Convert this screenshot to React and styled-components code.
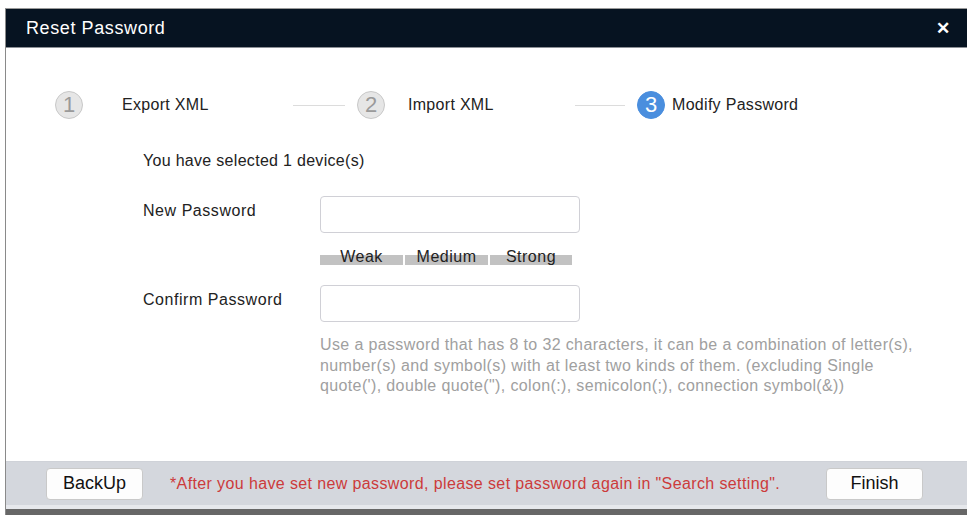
import React from 'react';
import styled, { createGlobalStyle } from 'styled-components';

const Global = createGlobalStyle`
	html, body {
		margin: 0;
		padding: 0;
		background: #ffffff;
	}
	body {
		font-family: "Liberation Sans", Arial, sans-serif;
		color: #222222;
	}
`;

const Page = styled.div`
	width: 967px;
	height: 524px;
	padding-top: 8px;
	padding-left: 5px;
	box-sizing: border-box;
	overflow: hidden;
`;

const Dialog = styled.div`
	display: flex;
	flex-direction: column;
	height: 506px;
	border-left: 1px solid #8a8a8a;
	border-top: 1px solid #9a9a9a;
`;

const Header = styled.div`
	height: 38px;
	background: #061321;
	border-bottom: 1px solid #8c9096;
	display: flex;
	align-items: center;
	justify-content: space-between;
	padding: 0 17px 0 20px;
	color: #ffffff;
`;

const Title = styled.div`
	font-size: 18px;
	letter-spacing: 0.6px;
`;

const Close = styled.div`
	font-size: 17px;
	font-weight: bold;
`;

const Body = styled.div`
	flex: 1;
	background: #ffffff;
	padding: 42px 0 0 49px;
`;

const Steps = styled.div`
	display: flex;
	align-items: center;
	height: 30px;
`;

const Circle = styled.div`
	width: 28px;
	height: 28px;
	border-radius: 50%;
	box-sizing: border-box;
	display: flex;
	align-items: center;
	justify-content: center;
	font-size: 22px;
	background: ${p => (p.$active ? '#4a8ede' : '#e6e6e6')};
	border: 1px solid ${p => (p.$active ? '#4a8ede' : '#c8c8c8')};
	color: ${p => (p.$active ? '#ffffff' : '#9a9a9a')};
`;

const StepLabel = styled.div`
	font-size: 16px;
	letter-spacing: 0.3px;
	margin-left: ${p => p.$gap}px;
	width: ${p => p.$width}px;
`;

const Line = styled.div`
	width: ${p => p.$width}px;
	height: 1px;
	background: #dcdcdc;
	margin-right: 12px;
`;

const Form = styled.div`
	padding-left: 88px;
	margin-top: 32px;
`;

const Selected = styled.div`
	font-size: 16px;
	letter-spacing: 0.3px;
	margin-bottom: 26px;
`;

const Row = styled.div`
	display: grid;
	grid-template-columns: 177px 260px;
	align-items: center;
`;

const Label = styled.div`
	font-size: 16px;
	letter-spacing: 0.55px;
	padding-bottom: 7px;
`;

const Input = styled.input`
	width: 260px;
	height: 37px;
	box-sizing: border-box;
	border: 1px solid #d0d0d6;
	border-radius: 4px;
	outline: none;
	padding: 0 8px;
`;

const Strength = styled.div`
	display: flex;
	gap: 2px;
	margin: 16px 0 20px 177px;
`;

const Segment = styled.div`
	width: ${p => p.$width}px;
	height: 16px;
	font-size: 16px;
	letter-spacing: 0.5px;
	line-height: 16px;
	text-align: center;
	background: linear-gradient(to bottom, transparent 6px, #c2c2c2 6px);
	color: #222222;
`;

const Hint = styled.div`
	margin: 13px 0 0 177px;
	width: 610px;
	font-size: 16px;
	letter-spacing: 0.37px;
	line-height: 20.5px;
	color: #a0a0a0;
`;

const Footer = styled.div`
	height: 43px;
	background: #d4d7dd;
	border-top: 1px solid #cfd2d8;
	border-bottom: 4px solid #e6e8ec;
	display: flex;
	align-items: center;
	padding: 0 44px 0 40px;
`;

const Bottom = styled.div`
	height: 6px;
	background: #676767;
`;

const Button = styled.button`
	width: 97px;
	height: 32px;
	background: #fdfdfd;
	border: 1px solid #c9c9c9;
	border-radius: 4px;
	font-family: "Liberation Sans", Arial, sans-serif;
	font-size: 18px;
	color: #111111;
	padding: 0;
`;

const Note = styled.div`
	flex: 1;
	margin-left: 27px;
	font-size: 16px;
	letter-spacing: 0.38px;
	color: #cc3b3b;
	white-space: nowrap;
`;

export default function App() {
	return (
		<Page>
			<Global />
			<Dialog>
				<Header>
					<Title>Reset Password</Title>
					<Close>✕</Close>
				</Header>
				<Body>
					<Steps>
						<Circle>1</Circle>
						<StepLabel $gap={39} $width={171}>Export XML</StepLabel>
						<Line $width={52} />
						<Circle>2</Circle>
						<StepLabel $gap={23} $width={167}>Import XML</StepLabel>
						<Line $width={50} />
						<Circle $active>3</Circle>
						<StepLabel $gap={7}>Modify Password</StepLabel>
					</Steps>
					<Form>
						<Selected>You have selected 1 device(s)</Selected>
						<Row>
							<Label>New Password</Label>
							<Input type="password" />
						</Row>
						<Strength>
							<Segment $width={83}>Weak</Segment>
							<Segment $width={83}>Medium</Segment>
							<Segment $width={82}>Strong</Segment>
						</Strength>
						<Row>
							<Label>Confirm Password</Label>
							<Input type="password" />
						</Row>
						<Hint>
							Use a password that has 8 to 32 characters, it can be a combination of letter(s),
							number(s) and symbol(s) with at least two kinds of them. (excluding Single
							quote('), double quote("), colon(:), semicolon(;), connection symbol(&))
						</Hint>
					</Form>
				</Body>
				<Footer>
					<Button>BackUp</Button>
					<Note>*After you have set new password, please set password again in "Search setting".</Note>
					<Button>Finish</Button>
				</Footer>
				<Bottom />
			</Dialog>
		</Page>
	);
}
